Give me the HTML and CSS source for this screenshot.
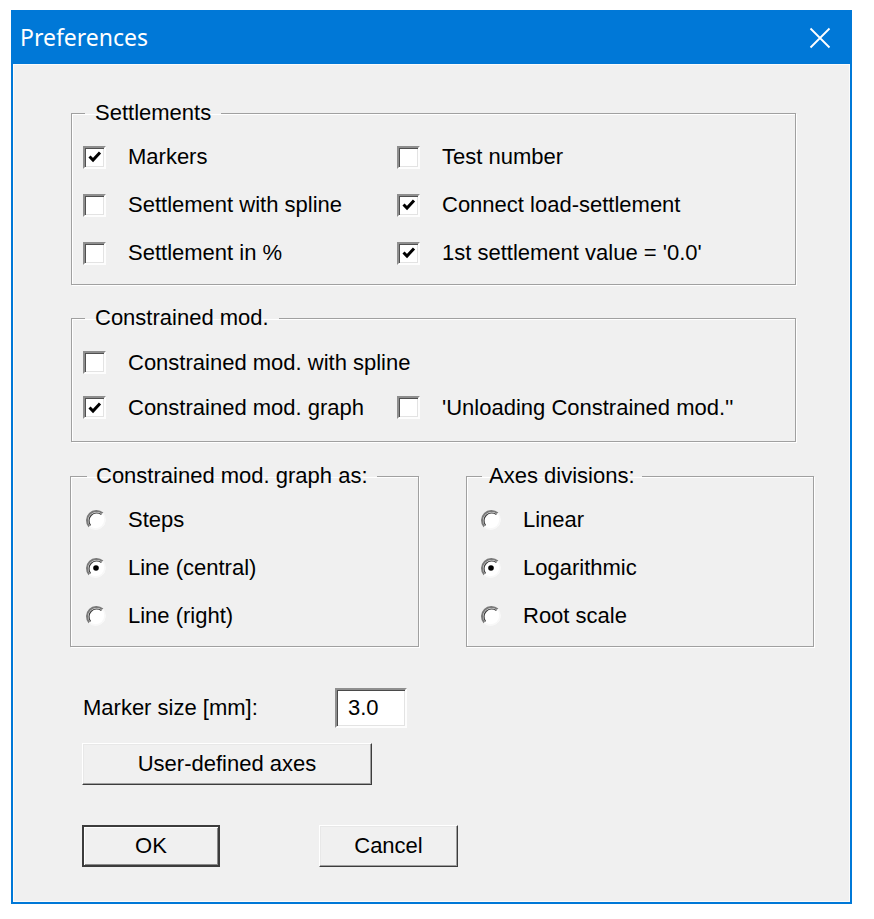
FILE: index.html
```html
<!DOCTYPE html>
<html>
<head>
<meta charset="utf-8">
<title>Preferences</title>
<link rel="stylesheet" href="styles.css">
</head>
<body>
<div class="window">
  <div class="titlebar">
    <span class="title">Preferences</span>
    <svg class="close" width="22" height="22" viewBox="0 0 22 22"><path d="M1.5 1.5 L20.5 20.5 M20.5 1.5 L1.5 20.5" stroke="#fff" stroke-width="1.8" fill="none"/></svg>
  </div>
  <div class="client">
    <fieldset class="group g-settle">
      <legend>Settlements</legend>
      <div class="grid rows48">
        <div class="opt"><span class="cb"><svg width="18" height="18" viewBox="0 0 18 18"><path d="M3.5 8.5 L7 12 L14 4.5" stroke="#000" stroke-width="3" fill="none"/></svg></span><span>Markers</span></div>
        <div class="opt"><span class="cb"></span><span>Test number</span></div>
        <div class="opt"><span class="cb"></span><span>Settlement with spline</span></div>
        <div class="opt"><span class="cb"><svg width="18" height="18" viewBox="0 0 18 18"><path d="M3.5 8.5 L7 12 L14 4.5" stroke="#000" stroke-width="3" fill="none"/></svg></span><span>Connect load-settlement</span></div>
        <div class="opt"><span class="cb"></span><span>Settlement in %</span></div>
        <div class="opt"><span class="cb"><svg width="18" height="18" viewBox="0 0 18 18"><path d="M3.5 8.5 L7 12 L14 4.5" stroke="#000" stroke-width="3" fill="none"/></svg></span><span>1st settlement value = '0.0'</span></div>
      </div>
    </fieldset>

    <fieldset class="group g-constr">
      <legend>Constrained mod.</legend>
      <div class="grid rows45">
        <div class="opt wide"><span class="cb"></span><span>Constrained mod. with spline</span></div>
        <div class="opt"><span class="cb"><svg width="18" height="18" viewBox="0 0 18 18"><path d="M3.5 8.5 L7 12 L14 4.5" stroke="#000" stroke-width="3" fill="none"/></svg></span><span>Constrained mod. graph</span></div>
        <div class="opt"><span class="cb"></span><span>'Unloading Constrained mod.''</span></div>
      </div>
    </fieldset>

    <div class="pair">
      <fieldset class="group g-graph">
        <legend>Constrained mod. graph as:</legend>
        <div class="list">
          <div class="opt"><svg class="rb" width="22" height="22" viewBox="0 0 22 22"><circle cx="11" cy="11" r="9.5" fill="#fff"/><path d="M4.3 17.7 A9.5 9.5 0 0 1 17.7 4.3" stroke="#7a7a7a" stroke-width="2" fill="none"/><path d="M5.6 16.4 A7.7 7.7 0 0 1 16.4 5.6" stroke="#3c3c3c" stroke-width="1.2" fill="none"/><path d="M17.7 4.3 A9.5 9.5 0 0 1 4.3 17.7" stroke="#f8f8f8" stroke-width="1.6" fill="none"/></svg><span>Steps</span></div>
          <div class="opt"><svg class="rb" width="22" height="22" viewBox="0 0 22 22"><circle cx="11" cy="11" r="9.5" fill="#fff"/><path d="M4.3 17.7 A9.5 9.5 0 0 1 17.7 4.3" stroke="#7a7a7a" stroke-width="2" fill="none"/><path d="M5.6 16.4 A7.7 7.7 0 0 1 16.4 5.6" stroke="#3c3c3c" stroke-width="1.2" fill="none"/><path d="M17.7 4.3 A9.5 9.5 0 0 1 4.3 17.7" stroke="#f8f8f8" stroke-width="1.6" fill="none"/><circle cx="11" cy="11" r="2.8" fill="#000"/></svg><span>Line (central)</span></div>
          <div class="opt"><svg class="rb" width="22" height="22" viewBox="0 0 22 22"><circle cx="11" cy="11" r="9.5" fill="#fff"/><path d="M4.3 17.7 A9.5 9.5 0 0 1 17.7 4.3" stroke="#7a7a7a" stroke-width="2" fill="none"/><path d="M5.6 16.4 A7.7 7.7 0 0 1 16.4 5.6" stroke="#3c3c3c" stroke-width="1.2" fill="none"/><path d="M17.7 4.3 A9.5 9.5 0 0 1 4.3 17.7" stroke="#f8f8f8" stroke-width="1.6" fill="none"/></svg><span>Line (right)</span></div>
        </div>
      </fieldset>
      <fieldset class="group g-axes">
        <legend>Axes divisions:</legend>
        <div class="list">
          <div class="opt"><svg class="rb" width="22" height="22" viewBox="0 0 22 22"><circle cx="11" cy="11" r="9.5" fill="#fff"/><path d="M4.3 17.7 A9.5 9.5 0 0 1 17.7 4.3" stroke="#7a7a7a" stroke-width="2" fill="none"/><path d="M5.6 16.4 A7.7 7.7 0 0 1 16.4 5.6" stroke="#3c3c3c" stroke-width="1.2" fill="none"/><path d="M17.7 4.3 A9.5 9.5 0 0 1 4.3 17.7" stroke="#f8f8f8" stroke-width="1.6" fill="none"/></svg><span>Linear</span></div>
          <div class="opt"><svg class="rb" width="22" height="22" viewBox="0 0 22 22"><circle cx="11" cy="11" r="9.5" fill="#fff"/><path d="M4.3 17.7 A9.5 9.5 0 0 1 17.7 4.3" stroke="#7a7a7a" stroke-width="2" fill="none"/><path d="M5.6 16.4 A7.7 7.7 0 0 1 16.4 5.6" stroke="#3c3c3c" stroke-width="1.2" fill="none"/><path d="M17.7 4.3 A9.5 9.5 0 0 1 4.3 17.7" stroke="#f8f8f8" stroke-width="1.6" fill="none"/><circle cx="11" cy="11" r="2.8" fill="#000"/></svg><span>Logarithmic</span></div>
          <div class="opt"><svg class="rb" width="22" height="22" viewBox="0 0 22 22"><circle cx="11" cy="11" r="9.5" fill="#fff"/><path d="M4.3 17.7 A9.5 9.5 0 0 1 17.7 4.3" stroke="#7a7a7a" stroke-width="2" fill="none"/><path d="M5.6 16.4 A7.7 7.7 0 0 1 16.4 5.6" stroke="#3c3c3c" stroke-width="1.2" fill="none"/><path d="M17.7 4.3 A9.5 9.5 0 0 1 4.3 17.7" stroke="#f8f8f8" stroke-width="1.6" fill="none"/></svg><span>Root scale</span></div>
        </div>
      </fieldset>
    </div>

    <div class="marker-row">
      <span class="marker-label">Marker size [mm]:</span>
      <span class="field">3.0</span>
    </div>
    <button class="btn btn-axes">User-defined axes</button>
    <div class="actions">
      <button class="btn btn-ok">OK</button>
      <button class="btn btn-cancel">Cancel</button>
    </div>
  </div>
</div>
</body>
</html>
```

FILE: styles.css
```css
html, body {
  margin: 0;
  padding: 0;
  background: #fff;
}

body {
  font-family: "Liberation Sans", Arial, sans-serif;
  font-size: 22px;
  color: #000;
}

.window {
  margin: 10px 0 0 11px;
  width: 841px;
  height: 894px;
  box-sizing: border-box;
  background: #0078d7;
  padding: 0 2px 2px 2px;
  display: flex;
  flex-direction: column;
}

.titlebar {
  height: 54px;
  flex: none;
  display: flex;
  align-items: center;
  justify-content: space-between;
  padding: 0 19px 0 7px;
}

.title {
  font-family: "Noto Sans", "Open Sans", sans-serif;
  font-size: 23px;
  color: #fff;
  line-height: 28px;
  margin-top: -1px;
}

.close {
  display: block;
  margin-top: 1px;
}

.client {
  flex: 1;
  background: #f0f0f0;
  box-shadow: inset 0 0 0 1px #fbfbfb;
  padding: 37px 0 0 58px;
  display: flex;
  flex-direction: column;
  align-items: flex-start;
}

.group {
  margin: 0;
  box-sizing: border-box;
  border: 1px solid #a0a0a0;
  box-shadow: 1px 1px 0 #fff, inset 1px 1px 0 #fff;
  min-width: 0;
}

.group legend {
  line-height: 24px;
  padding: 0 10px;
  margin-left: 2px;
}

.g-settle {
  width: 725px;
  padding: 8px 0 7px 11px;
}

.g-constr {
  width: 725px;
  margin-top: 21px;
  padding: 10px 0 11px 11px;
}

.grid {
  display: grid;
  grid-template-columns: 314px 1fr;
}

.rows48 { grid-auto-rows: 48px; }
.rows45 { grid-auto-rows: 45px; }

.wide { grid-column: 1 / 3; }

.opt {
  display: flex;
  align-items: center;
  white-space: nowrap;
  line-height: 24px;
}

.cb {
  width: 23px;
  height: 23px;
  box-sizing: border-box;
  flex: none;
  background: #fff;
  border: 2px solid;
  border-color: #8e8e8e #fdfdfd #fdfdfd #8e8e8e;
  box-shadow: inset 1px 1px 0 #505050, inset -1px -1px 0 #e3e3e3;
  margin-right: 22px;
  display: flex;
  align-items: center;
  justify-content: center;
}

.cb svg { display: block; }

.pair {
  display: flex;
  gap: 47px;
  margin-top: 22px;
  margin-left: -1px;
}

.g-graph {
  width: 349px;
  padding: 8px 0 6px 14px;
}

.g-axes {
  width: 348px;
  padding: 8px 0 6px 13px;
}

.g-axes legend {
  padding: 0 7px;
  margin-left: 2px;
}

.g-graph legend {
  padding: 0 9px;
  margin-left: 2px;
}

.list {
  display: grid;
  grid-auto-rows: 48px;
}

.rb {
  display: block;
  flex: none;
  margin-right: 21px;
}

.marker-row {
  display: flex;
  align-items: center;
  margin-top: 41px;
  margin-left: 12px;
}

.marker-label {
  width: 252px;
}

.field {
  width: 72px;
  height: 40px;
  box-sizing: border-box;
  background: #fff;
  border: 2px solid;
  border-color: #8f8f8f #fdfdfd #fdfdfd #8f8f8f;
  box-shadow: inset 1px 1px 0 #4a4a4a, inset -1px -1px 0 #e3e3e3;
  padding-left: 11px;
  display: flex;
  align-items: center;
}

.btn {
  font-family: "Liberation Sans", Arial, sans-serif;
  font-size: 22px;
  color: #000;
  background: #f0f0f0;
  height: 42px;
  box-sizing: border-box;
  border: 1px solid;
  border-color: #fff #3c3c3c #3c3c3c #fff;
  box-shadow: inset -1px -1px 0 #a0a0a0, inset 1px 1px 0 #e8e8e8;
  padding: 0;
  margin: 0;
}

.btn-axes {
  width: 290px;
  margin-top: 15px;
  margin-left: 11px;
}

.actions {
  display: flex;
  gap: 99px;
  margin-top: 40px;
  margin-left: 11px;
}

.btn-ok {
  width: 138px;
  border: 2px solid #3c3c3c;
  box-shadow: inset 1px 1px 0 #fff, inset -1px -1px 0 #8a8a8a;
}

.btn-cancel {
  width: 139px;
}
```
